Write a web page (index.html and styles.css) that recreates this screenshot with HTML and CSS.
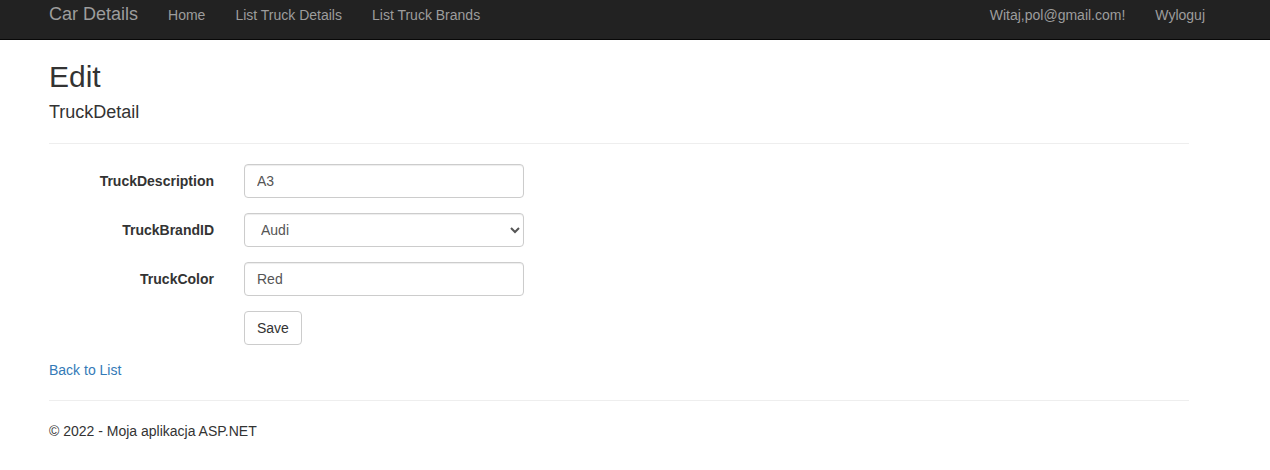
FILE: index.html
```html
<!DOCTYPE html>
<html lang="pl">
<head>
<meta charset="utf-8">
<title>Edit - Car Details</title>
<link rel="stylesheet" href="styles.css">
</head>
<body>
<nav class="navbar">
  <div class="container nav-inner">
    <div class="nav-left">
      <a class="brand" href="#">Car Details</a>
      <ul class="nav">
        <li><a href="#">Home</a></li>
        <li><a href="#">List Truck Details</a></li>
        <li><a href="#">List Truck Brands</a></li>
      </ul>
    </div>
    <ul class="nav nav-right">
      <li><a href="#">Witaj,pol@gmail.com!</a></li>
      <li><a href="#">Wyloguj</a></li>
    </ul>
  </div>
</nav>
<div class="container body-content">
  <h2 class="title">Edit</h2>
  <form class="form-horizontal">
    <h4 class="subtitle">TruckDetail</h4>
    <hr class="rule">
    <div class="form-group">
      <label class="control-label" for="desc">TruckDescription</label>
      <div class="field"><input class="form-control" id="desc" type="text" value="A3"></div>
    </div>
    <div class="form-group">
      <label class="control-label" for="brand">TruckBrandID</label>
      <div class="field">
        <select class="form-control" id="brand">
          <option selected>Audi</option>
          <option>BMW</option>
        </select>
      </div>
    </div>
    <div class="form-group">
      <label class="control-label" for="color">TruckColor</label>
      <div class="field"><input class="form-control" id="color" type="text" value="Red"></div>
    </div>
    <div class="form-group">
      <div class="control-label"></div>
      <div class="field"><button type="button" class="btn">Save</button></div>
    </div>
  </form>
  <div class="back"><a href="#">Back to List</a></div>
  <hr class="rule">
  <footer class="footer">
    <p>&copy; 2022 - Moja aplikacja ASP.NET</p>
  </footer>
</div>
</body>
</html>
```

FILE: styles.css
```css
* { box-sizing: border-box; }
html, body { margin: 0; padding: 0; }
body {
  font-family: "Liberation Sans", Arial, Helvetica, sans-serif;
  font-size: 14px;
  line-height: 20px;
  color: #333;
  background: #fff;
}
a { color: #337ab7; text-decoration: none; }

.container {
  width: 1170px;
  margin-left: 34px;
  padding: 0 15px;
}

.navbar {
  height: 40px;
  background: #222;
  border-bottom: 1px solid #080808;
}
.nav-inner {
  display: flex;
  justify-content: space-between;
  align-items: flex-start;
}
.nav-left { display: flex; }
.brand {
  display: block;
  font-size: 18px;
  line-height: 20px;
  padding: 4px 15px 0 15px;
  margin-left: -15px;
  color: #9d9d9d;
}
.nav {
  list-style: none;
  margin: 0;
  padding: 0;
  display: flex;
}
.nav li a {
  display: block;
  padding: 5px 15px 0;
  line-height: 20px;
  color: #9d9d9d;
}
.nav-right { margin-right: -31px; }

.title {
  font-size: 30px;
  font-weight: 500;
  line-height: 33px;
  margin: 20px 0 10px;
}
.subtitle {
  font-size: 18px;
  font-weight: 500;
  line-height: 19.8px;
  margin: 10px 0;
}
.rule {
  margin: 20px 0;
  border: 0;
  border-top: 1px solid #eee;
  height: 0;
}

.form-horizontal { margin: 0; }
.form-group {
  display: flex;
  margin: 0 -15px 15px;
}
.control-label {
  width: 195px;
  padding: 7px 15px 0;
  text-align: right;
  font-weight: bold;
  line-height: 20px;
}
.field {
  padding: 0 15px;
}
.form-control {
  display: block;
  width: 280px;
  height: 34px;
  padding: 6px 12px;
  font-family: inherit;
  font-size: 14px;
  line-height: 20px;
  color: #555;
  background: #fff;
  border: 1px solid #ccc;
  border-radius: 4px;
  box-shadow: inset 0 1px 1px rgba(0,0,0,.075);
  margin: 0;
}
select.form-control { padding: 6px 8px 6px 12px; }
.btn {
  display: block;
  height: 34px;
  padding: 6px 12px;
  font-family: inherit;
  font-size: 14px;
  line-height: 20px;
  color: #333;
  background: #fff;
  border: 1px solid #ccc;
  border-radius: 4px;
  margin: 0;
}
.back { line-height: 20px; }
.footer p { margin: 0 0 10px; }
```
